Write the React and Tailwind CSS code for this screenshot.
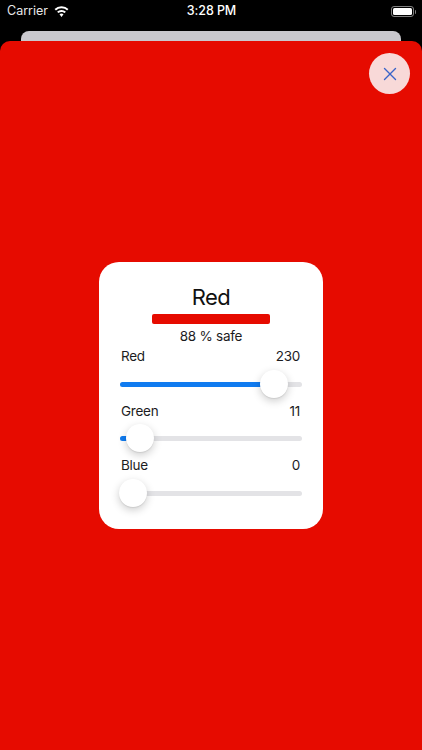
import { X } from 'lucide-react';

const SLIDERS = [
  { label: 'Red', value: 230, thumb: 154 },
  { label: 'Green', value: 11, thumb: 20 },
  { label: 'Blue', value: 0, thumb: 13 },
];

function Wifi() {
  return (
    <svg width="15" height="12" viewBox="0 0 16 12" fill="white">
      <path d="M8 2.1c2.3 0 4.4.9 5.9 2.35l1.5-1.55A10.4 10.4 0 0 0 8 0 10.4 10.4 0 0 0 .6 2.9l1.5 1.55A8.4 8.4 0 0 1 8 2.1z" />
      <path d="M8 5.9c1.25 0 2.4.5 3.25 1.25l1.5-1.55A6.8 6.8 0 0 0 8 3.75 6.8 6.8 0 0 0 3.25 5.6l1.5 1.55A4.8 4.8 0 0 1 8 5.9z" />
      <path d="M8 7.6c-.85 0-1.6.33-2.15.85L8 11.2l2.15-2.75A3.1 3.1 0 0 0 8 7.6z" />
    </svg>
  );
}

function Battery() {
  return (
    <div className="flex items-center gap-[1px]">
      <div className="w-[23px] h-[11px] rounded-[3px] border border-white/50 p-[1px]">
        <div className="w-full h-full rounded-[1.5px] bg-white" />
      </div>
      <div className="w-[1px] h-[4px] bg-white/50 rounded-r" />
    </div>
  );
}

function Slider({ label, value, thumb }) {
  return (
    <div className="flex flex-col">
      <div className="flex justify-between pl-[1px] pr-[2px] text-[13.5px] tracking-[-0.25px] leading-[18px] text-[#1c1c1e]">
        <span>{label}</span>
        <span>{value}</span>
      </div>
      <div className="relative h-[36.5px] pt-[2px] flex items-center">
        <div className="w-full h-[5px] rounded-full bg-[#e3e3e6] overflow-hidden">
          <div className="h-full bg-[#107bf0]" style={{ width: thumb }} />
        </div>
        <div
          className="absolute top-[4.5px] w-[28px] h-[28px] -ml-[14px] rounded-full bg-white shadow-[0_3px_8px_rgba(0,0,0,0.2),0_1px_1px_rgba(0,0,0,0.08)]"
          style={{ left: thumb }}
        />
      </div>
    </div>
  );
}

export default function App() {
  return (
    <div className="w-[422px] h-[750px] bg-black flex flex-col overflow-hidden font-['Inter',sans-serif]">
      <div className="h-[21px] mt-[1px] pl-[7px] pr-[6px] shrink-0 grid grid-cols-3 items-center text-white">
        <div className="flex items-center gap-[6px]">
          <span className="text-[#e8e8e8] text-[12.5px]">Carrier</span>
          <Wifi />
        </div>
        <div className="text-center font-medium text-[12.5px] tracking-[-0.1px]">3:28 PM</div>
        <div className="flex justify-end">
          <Battery />
        </div>
      </div>
      <div className="h-[10px] mt-[9px] mx-[21px] shrink-0 rounded-t-[8px] bg-[#c9c8cd]" />
      <div className="relative flex-1 rounded-t-[10px] bg-[#e60b00] flex items-center justify-center">
        <button className="absolute top-[12px] right-[12px] w-[41px] h-[41px] rounded-full bg-[#f8d9d8] flex items-center justify-center text-[#3a64c8]">
          <X size={22} strokeWidth={1.5} />
        </button>
        <div className="w-[224px] h-[267px] rounded-[20px] bg-white px-[21px] pt-[22px] flex flex-col">
          <h1 className="text-center text-[22px] tracking-[-0.6px] leading-[26px] text-[#111]">Red</h1>
          <div className="mt-[4px] mx-auto w-[118px] h-[10px] rounded-[2px] bg-[#e60b00]" />
          <p className="mt-[3px] text-center text-[13.5px] tracking-[-0.25px] leading-[18px] text-[#1c1c1e]">88 % safe</p>
          <div className="mt-[2px] flex flex-col">
            {SLIDERS.map((s) => (
              <Slider key={s.label} {...s} />
            ))}
          </div>
        </div>
      </div>
    </div>
  );
}
